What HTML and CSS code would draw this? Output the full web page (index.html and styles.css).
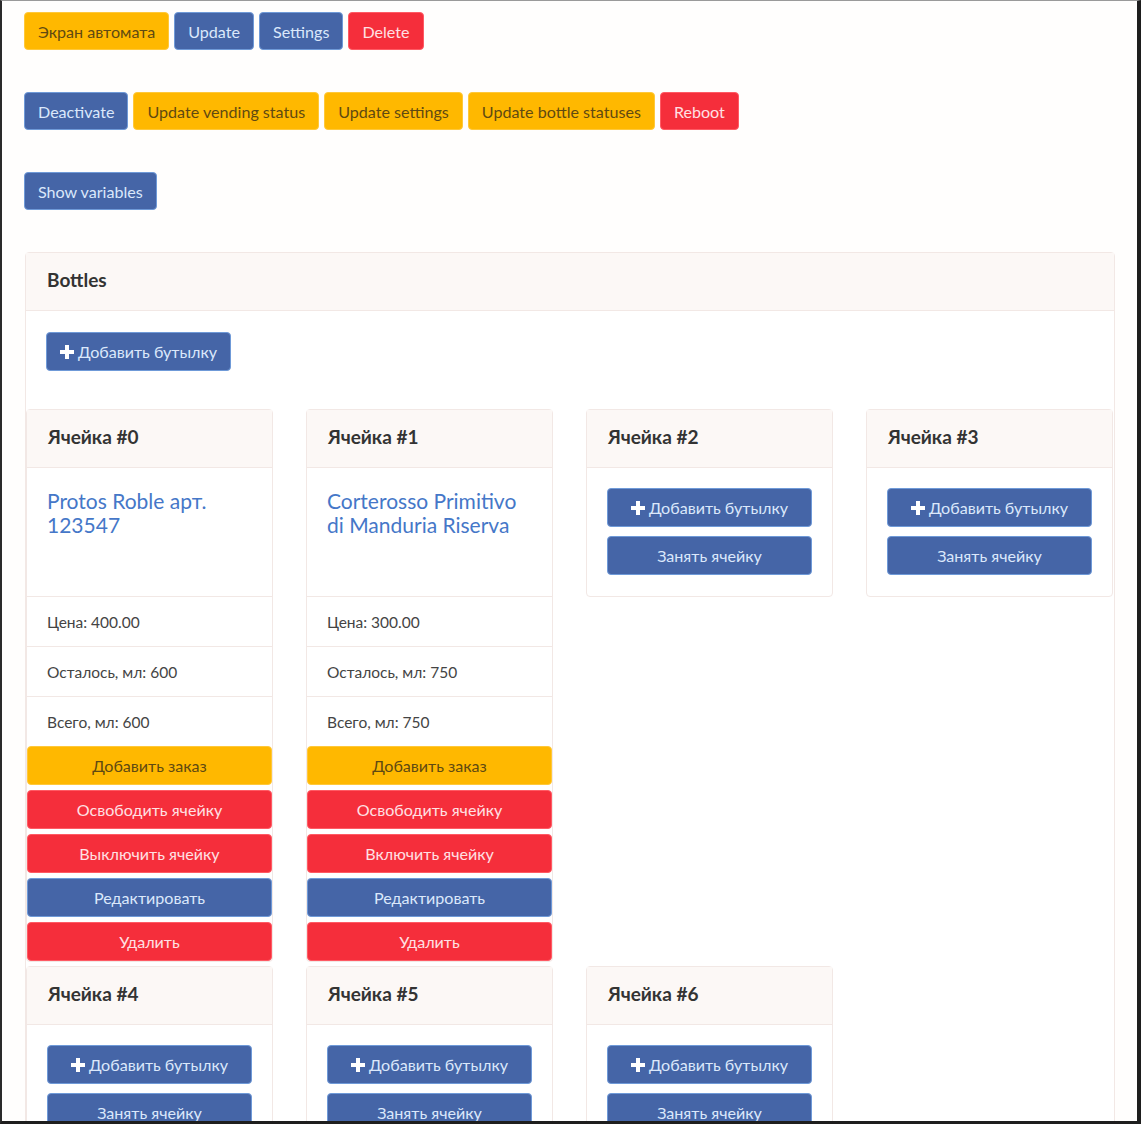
FILE: index.html
```html
<!DOCTYPE html>
<html lang="ru">
<head>
<meta charset="utf-8">
<title>Vending</title>
<link rel="stylesheet" href="styles.css">
</head>
<body>
<div class="frame">
  <div class="page">
    <div class="btn-row">
      <button class="btn yellow">Экран автомата</button>
      <button class="btn blue">Update</button>
      <button class="btn blue">Settings</button>
      <button class="btn red">Delete</button>
    </div>
    <div class="btn-row">
      <button class="btn blue">Deactivate</button>
      <button class="btn yellow">Update vending status</button>
      <button class="btn yellow">Update settings</button>
      <button class="btn yellow">Update bottle statuses</button>
      <button class="btn red">Reboot</button>
    </div>
    <div class="btn-row">
      <button class="btn blue">Show variables</button>
    </div>

    <div class="card main">
      <div class="card-header">Bottles</div>
      <div class="main-top">
        <button class="btn blue add"><svg class="plus" viewBox="0 0 14 14"><rect x="5" y="0" width="4" height="14"/><rect x="0" y="5" width="14" height="4"/></svg>Добавить бутылку</button>
      </div>
      <div class="cells">
        <div class="card cell">
          <div class="card-header">Ячейка #0</div>
          <div class="cell-body"><a class="bottle" href="#">Protos Roble арт. 123547</a></div>
          <div class="item">Цена: 400.00</div>
          <div class="item">Осталось, мл: 600</div>
          <div class="item">Всего, мл: 600</div>
          <div class="actions">
            <button class="btn yellow wide">Добавить заказ</button>
            <button class="btn red wide">Освободить ячейку</button>
            <button class="btn red wide">Выключить ячейку</button>
            <button class="btn blue wide">Редактировать</button>
            <button class="btn red wide">Удалить</button>
          </div>
        </div>
        <div class="card cell">
          <div class="card-header">Ячейка #1</div>
          <div class="cell-body"><a class="bottle" href="#">Corterosso Primitivo di Manduria Riserva</a></div>
          <div class="item">Цена: 300.00</div>
          <div class="item">Осталось, мл: 750</div>
          <div class="item">Всего, мл: 750</div>
          <div class="actions">
            <button class="btn yellow wide">Добавить заказ</button>
            <button class="btn red wide">Освободить ячейку</button>
            <button class="btn red wide">Включить ячейку</button>
            <button class="btn blue wide">Редактировать</button>
            <button class="btn red wide">Удалить</button>
          </div>
        </div>
        <div class="card cell">
          <div class="card-header">Ячейка #2</div>
          <div class="empty-body">
            <button class="btn blue wide"><svg class="plus" viewBox="0 0 14 14"><rect x="5" y="0" width="4" height="14"/><rect x="0" y="5" width="14" height="4"/></svg>Добавить бутылку</button>
            <button class="btn blue wide">Занять ячейку</button>
          </div>
        </div>
        <div class="card cell">
          <div class="card-header">Ячейка #3</div>
          <div class="empty-body">
            <button class="btn blue wide"><svg class="plus" viewBox="0 0 14 14"><rect x="5" y="0" width="4" height="14"/><rect x="0" y="5" width="14" height="4"/></svg>Добавить бутылку</button>
            <button class="btn blue wide">Занять ячейку</button>
          </div>
        </div>
        <div class="card cell">
          <div class="card-header">Ячейка #4</div>
          <div class="empty-body">
            <button class="btn blue wide"><svg class="plus" viewBox="0 0 14 14"><rect x="5" y="0" width="4" height="14"/><rect x="0" y="5" width="14" height="4"/></svg>Добавить бутылку</button>
            <button class="btn blue wide">Занять ячейку</button>
          </div>
        </div>
        <div class="card cell">
          <div class="card-header">Ячейка #5</div>
          <div class="empty-body">
            <button class="btn blue wide"><svg class="plus" viewBox="0 0 14 14"><rect x="5" y="0" width="4" height="14"/><rect x="0" y="5" width="14" height="4"/></svg>Добавить бутылку</button>
            <button class="btn blue wide">Занять ячейку</button>
          </div>
        </div>
        <div class="card cell">
          <div class="card-header">Ячейка #6</div>
          <div class="empty-body">
            <button class="btn blue wide"><svg class="plus" viewBox="0 0 14 14"><rect x="5" y="0" width="4" height="14"/><rect x="0" y="5" width="14" height="4"/></svg>Добавить бутылку</button>
            <button class="btn blue wide">Занять ячейку</button>
          </div>
        </div>
      </div>
    </div>
  </div>
</div>
</body>
</html>
```

FILE: styles.css
```css
* { box-sizing: border-box; }
html, body { margin: 0; padding: 0; background: #fff; }
body { font-family: Lato, "Liberation Sans", sans-serif; color: #333; }

.frame {
  width: 1141px;
  height: 1124px;
  overflow: hidden;
  border-top: 1px solid #9a9a9a;
  border-left: 2px solid #2a2a2a;
  border-right: 4px solid #1e1e1e;
  border-bottom: 3px solid #1e1e1e;
  background: #fffefd;
}

.page {
  padding: 11px 0 0 22px;
}

.btn-row {
  display: flex;
  gap: 5px;
  margin-bottom: 42px;
}

.btn {
  font-family: inherit;
  font-size: 16.1px;
  height: 38px;
  padding: 0 13px;
  border-radius: 4px;
  border: 1px solid transparent;
  cursor: pointer;
  display: inline-flex;
  align-items: center;
  justify-content: center;
}
.yellow { background: #ffb800; border-color: #ffc83a; color: #5f4a12; }
.blue { background: #4565a7; border-color: #6f9ad8; color: #dbe8fb; }
.red { background: #f52e3b; border-color: #ff5a64; color: #ffe0e3; }

.plus { width: 14px; height: 14px; fill: #fff; margin-right: 4px; }

.card {
  background: #fff;
  border: 1px solid #f2e8e5;
  border-radius: 4px;
}
.main {
  width: 1090px;
  margin-left: 1px;
  margin-top: 2px;
}
.card-header {
  height: 58px;
  display: flex;
  align-items: center;
  padding: 0 20px 4px;
  background: #fcf8f6;
  border-bottom: 1px solid #f2e8e5;
  font-weight: bold;
  font-size: 19px;
  color: #333;
}
.main .card-header { padding-left: 21px; }

.main-top {
  padding: 21px 20px 38px;
}
.add { height: 39px; }

.cells {
  display: grid;
  grid-template-columns: repeat(4, 247px);
  column-gap: 33px;
  row-gap: 4px;
  align-items: start;
}

.cell-body {
  height: 128px;
  padding: 21px 26px 21px 20px;
}
.bottle {
  color: #4577c8;
  text-decoration: none;
  font-size: 21px;
  line-height: 24px;
}
.item {
  height: 50px;
  display: flex;
  align-items: center;
  padding: 0 20px;
  border-top: 1px solid #f2e8e5;
  font-size: 15.5px;
  color: #444;
}
.actions {
  display: flex;
  flex-direction: column;
  gap: 5px;
}
.wide { width: 100%; height: 39px; }

.empty-body {
  padding: 20px 20px 21px;
  display: flex;
  flex-direction: column;
  gap: 9px;
}
```
